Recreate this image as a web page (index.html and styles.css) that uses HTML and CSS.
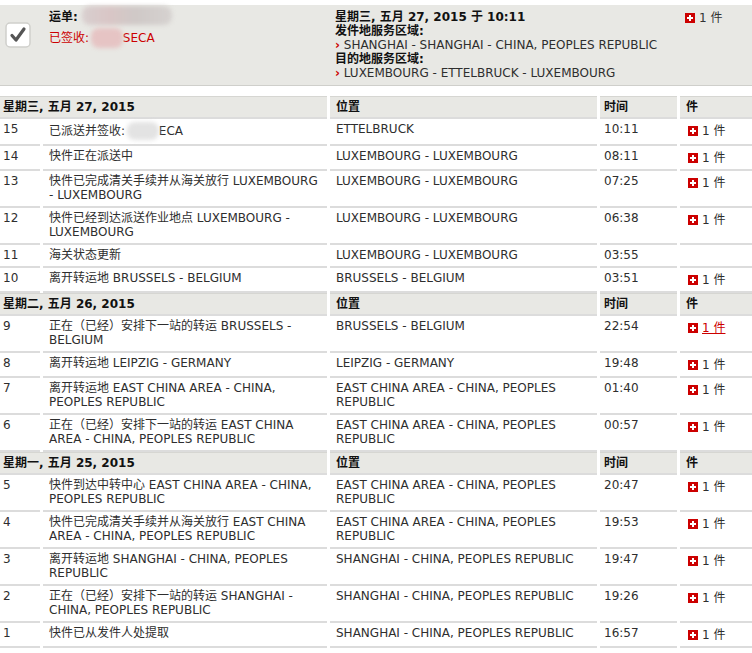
FILE: index.html
```html
<!DOCTYPE html>
<html lang="zh">
<head>
<meta charset="utf-8">
<title>运单跟踪</title>
<link rel="stylesheet" href="styles.css">
</head>
<body>
<div class="summary">
  <div class="sum-check">
    <svg width="26" height="26" viewBox="0 0 26 26"><rect x="1" y="1" width="24" height="24" rx="4" ry="4" fill="#fff" stroke="#cfcfcb" stroke-width="1.5"/><path d="M7 13.5 L11 18 L19 7" fill="none" stroke="#555" stroke-width="3.2" stroke-linecap="round" stroke-linejoin="round"/></svg>
  </div>
  <div class="sum-main">
    <div class="b">运单: <span class="redact r1"></span></div>
    <div class="red">已签收: <span class="redact r2"></span>SECA</div>
  </div>
  <div class="sum-info">
    <div class="b">星期三, 五月 27, 2015 于 10:11</div>
    <div class="b">发件地服务区域:</div>
    <div><span class="chev">›</span> SHANGHAI - SHANGHAI - CHINA, PEOPLES REPUBLIC</div>
    <div class="b">目的地服务区域:</div>
    <div><span class="chev">›</span> LUXEMBOURG - ETTELBRUCK - LUXEMBOURG</div>
  </div>
  <div class="sum-pcs"><span class="plus"></span>1 件</div>
</div>

<div class="events">
  <div class="row hd"><div class="c span2">星期三, 五月 27, 2015</div><div class="c loc">位置</div><div class="c tm">时间</div><div class="c pc">件</div></div>
  <div class="row"><div class="c num">15</div><div class="c">已派送并签收: <span class="redact r3"></span>ECA</div><div class="c loc">ETTELBRUCK</div><div class="c tm">10:11</div><div class="c pc"><span class="plus"></span>1 件</div></div>
  <div class="row"><div class="c num">14</div><div class="c">快件正在派送中</div><div class="c loc">LUXEMBOURG - LUXEMBOURG</div><div class="c tm">08:11</div><div class="c pc"><span class="plus"></span>1 件</div></div>
  <div class="row"><div class="c num">13</div><div class="c">快件已完成清关手续并从海关放行 LUXEMBOURG - LUXEMBOURG</div><div class="c loc">LUXEMBOURG - LUXEMBOURG</div><div class="c tm">07:25</div><div class="c pc"><span class="plus"></span>1 件</div></div>
  <div class="row"><div class="c num">12</div><div class="c">快件已经到达派送作业地点 LUXEMBOURG - LUXEMBOURG</div><div class="c loc">LUXEMBOURG - LUXEMBOURG</div><div class="c tm">06:38</div><div class="c pc"><span class="plus"></span>1 件</div></div>
  <div class="row"><div class="c num">11</div><div class="c">海关状态更新</div><div class="c loc">LUXEMBOURG - LUXEMBOURG</div><div class="c tm">03:55</div><div class="c pc"></div></div>
  <div class="row"><div class="c num">10</div><div class="c">离开转运地 BRUSSELS - BELGIUM</div><div class="c loc">BRUSSELS - BELGIUM</div><div class="c tm">03:51</div><div class="c pc"><span class="plus"></span>1 件</div></div>

  <div class="row hd"><div class="c span2">星期二, 五月 26, 2015</div><div class="c loc">位置</div><div class="c tm">时间</div><div class="c pc">件</div></div>
  <div class="row"><div class="c num">9</div><div class="c">正在（已经）安排下一站的转运 BRUSSELS - BELGIUM</div><div class="c loc">BRUSSELS - BELGIUM</div><div class="c tm">22:54</div><div class="c pc"><span class="plus"></span><a class="pclink" href="#">1 件</a></div></div>
  <div class="row"><div class="c num">8</div><div class="c">离开转运地 LEIPZIG - GERMANY</div><div class="c loc">LEIPZIG - GERMANY</div><div class="c tm">19:48</div><div class="c pc"><span class="plus"></span>1 件</div></div>
  <div class="row"><div class="c num">7</div><div class="c">离开转运地 EAST CHINA AREA - CHINA, PEOPLES REPUBLIC</div><div class="c loc">EAST CHINA AREA - CHINA, PEOPLES REPUBLIC</div><div class="c tm">01:40</div><div class="c pc"><span class="plus"></span>1 件</div></div>
  <div class="row"><div class="c num">6</div><div class="c">正在（已经）安排下一站的转运 EAST CHINA AREA - CHINA, PEOPLES REPUBLIC</div><div class="c loc">EAST CHINA AREA - CHINA, PEOPLES REPUBLIC</div><div class="c tm">00:57</div><div class="c pc"><span class="plus"></span>1 件</div></div>

  <div class="row hd"><div class="c span2">星期一, 五月 25, 2015</div><div class="c loc">位置</div><div class="c tm">时间</div><div class="c pc">件</div></div>
  <div class="row"><div class="c num">5</div><div class="c">快件到达中转中心 EAST CHINA AREA - CHINA, PEOPLES REPUBLIC</div><div class="c loc">EAST CHINA AREA - CHINA, PEOPLES REPUBLIC</div><div class="c tm">20:47</div><div class="c pc"><span class="plus"></span>1 件</div></div>
  <div class="row"><div class="c num">4</div><div class="c">快件已完成清关手续并从海关放行 EAST CHINA AREA - CHINA, PEOPLES REPUBLIC</div><div class="c loc">EAST CHINA AREA - CHINA, PEOPLES REPUBLIC</div><div class="c tm">19:53</div><div class="c pc"><span class="plus"></span>1 件</div></div>
  <div class="row"><div class="c num">3</div><div class="c">离开转运地 SHANGHAI - CHINA, PEOPLES REPUBLIC</div><div class="c loc">SHANGHAI - CHINA, PEOPLES REPUBLIC</div><div class="c tm">19:47</div><div class="c pc"><span class="plus"></span>1 件</div></div>
  <div class="row"><div class="c num">2</div><div class="c">正在（已经）安排下一站的转运 SHANGHAI - CHINA, PEOPLES REPUBLIC</div><div class="c loc">SHANGHAI - CHINA, PEOPLES REPUBLIC</div><div class="c tm">19:26</div><div class="c pc"><span class="plus"></span>1 件</div></div>
  <div class="row"><div class="c num">1</div><div class="c">快件已从发件人处提取</div><div class="c loc">SHANGHAI - CHINA, PEOPLES REPUBLIC</div><div class="c tm">16:57</div><div class="c pc"><span class="plus"></span>1 件</div></div>
</div>
</body>
</html>
```
FILE: styles.css
```css
html, body {
  margin: 0;
  padding: 0;
  background: #fff;
}
body {
  font-family: "DejaVu Sans", Verdana, "Noto Sans CJK SC", sans-serif;
  font-size: 12px;
  line-height: 14px;
  color: #2e2e2e;
}

/* summary panel */
.summary {
  margin-top: 5px;
  height: 81px;
  box-sizing: border-box;
  background: #e8e8e4;
  border-bottom: 1px solid #cfcfcb;
  display: grid;
  grid-template-columns: 43px 287px 350px 72px;
  padding-top: 5px;
}
.sum-check {
  padding: 12px 0 0 5px;
}
.sum-check svg {
  display: block;
}
.sum-main {
  padding-left: 6px;
}
.sum-main .red {
  margin-top: 3px;
}
.sum-info {
  padding-left: 5px;
}
.sum-pcs {
  padding: 1px 0 0 5px;
  color: #333;
}
.b {
  font-weight: bold;
  color: #111;
}
.red {
  color: #cc0000;
}
.chev {
  color: #cc0000;
  font-weight: bold;
}

.redact {
  display: inline-block;
  vertical-align: middle;
  filter: blur(2px);
  border-radius: 8px;
}
.r1 {
  width: 90px;
  height: 19px;
  margin-top: -4px;
  background: linear-gradient(90deg, #d8cfcf 0%, #d9c6c6 30%, #cfc9c7 60%, #d6d2d0 100%);
}
.r2 {
  width: 32px;
  height: 20px;
  margin-left: -2px;
  background: #e6c4c4;
}
.r3 {
  width: 32px;
  height: 18px;
  margin-left: -2px;
  background: #e3e3e3;
}

/* plus icon */
.plus {
  display: inline-block;
  position: relative;
  width: 10px;
  height: 10px;
  background: #cc0000;
  vertical-align: -1px;
  margin-right: 4px;
}
.plus::before,
.plus::after {
  content: "";
  position: absolute;
  background: #fff;
}
.plus::before {
  left: 2px;
  top: 4px;
  width: 6px;
  height: 2px;
}
.plus::after {
  left: 4px;
  top: 2px;
  width: 2px;
  height: 6px;
}

/* events table */
.events {
  margin-top: 10px;
}
.row {
  display: grid;
  grid-template-columns: 40px 284px 267px 77px 72px;
  column-gap: 3px;
}
.c {
  padding: 3px 6px 4px 6px;
  border-bottom: 2px solid #dcdcdc;
}
.c.num {
  padding-left: 3px;
}
.c.tm {
  padding-left: 4px;
}
.c.pc {
  padding: 5px 4px 4px 8px;
}
.row.hd .c {
  background: #e8e8e4;
  border-top: 1px solid #d6d6d2;
  border-bottom: 2px solid #dcdcdc;
  padding: 3px 4px 3px 6px;
  font-weight: bold;
  color: #111;
}
.row.hd .c.span2 {
  grid-column: span 2;
  padding-left: 3px;
}
.row.hd .c.tm {
  padding-left: 4px;
}
.row.hd .c.pc {
  padding-left: 6px;
}
.pclink {
  color: #cc0000;
  text-decoration: underline;
}
```
